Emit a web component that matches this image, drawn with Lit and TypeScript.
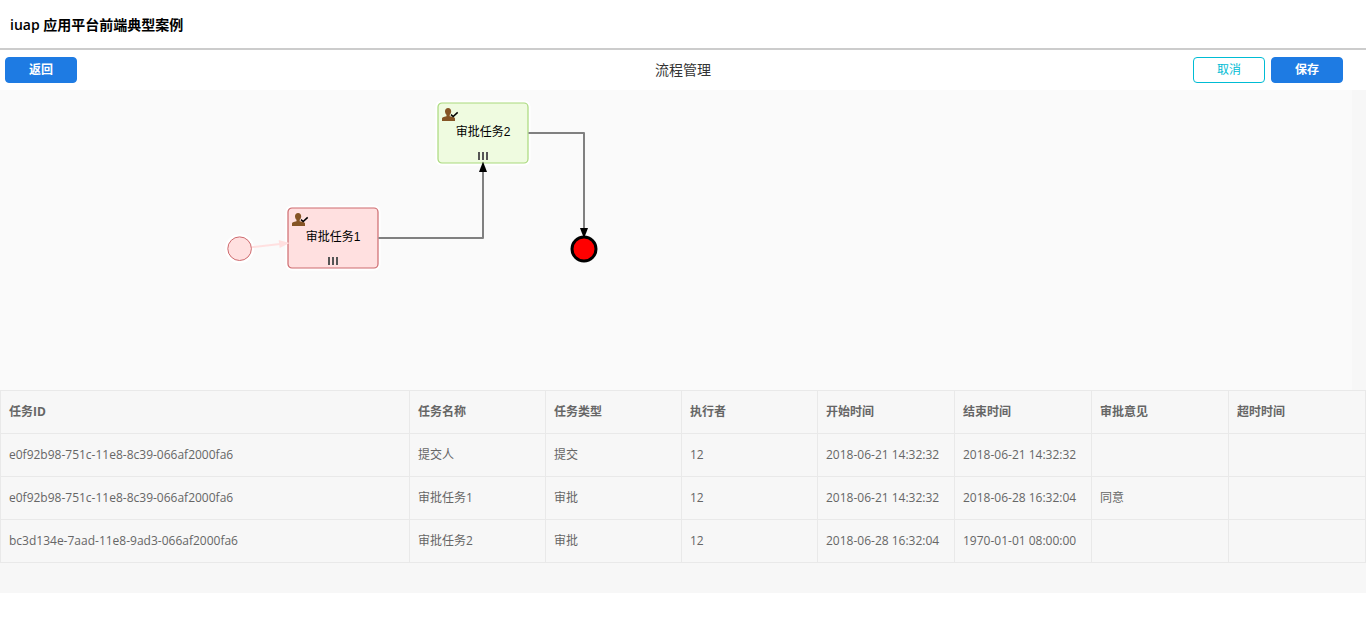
import { LitElement, html, svg, css } from "lit";
import { customElement } from "lit/decorators.js";

const HEADERS = ["任务ID", "任务名称", "任务类型", "执行者", "开始时间", "结束时间", "审批意见", "超时时间"];

const ROWS = [
  ["e0f92b98-751c-11e8-8c39-066af2000fa6", "提交人", "提交", "12", "2018-06-21 14:32:32", "2018-06-21 14:32:32", "", ""],
  ["e0f92b98-751c-11e8-8c39-066af2000fa6", "审批任务1", "审批", "12", "2018-06-21 14:32:32", "2018-06-28 16:32:04", "同意", ""],
  ["bc3d134e-7aad-11e8-9ad3-066af2000fa6", "审批任务2", "审批", "12", "2018-06-28 16:32:04", "1970-01-01 08:00:00", "", ""],
];

const taskNode = (x: number, y: number, label: string, kind: string) => svg`
  <g transform="translate(${x} ${y})">
    <rect class="halo" x="-2.500" y="-2.500" width="95" height="65" rx="6"></rect>
    <rect class="task ${kind}" width="90" height="60" rx="4"></rect>
    <path class="user" d="M4 18v-2.500c0-1 1.300-1.700 4.500-2.300v-1.400C7.600 11 7 9.600 7 8.200 7 6.300 8.200 5 10.100 5s3.100 1.300 3.100 3.200c0 1.400-.6 2.800-1.500 3.600v1.400c3.800.6 5.300 1.300 5.300 2.300V18z"></path>
    <path class="check" d="M13 11.600l2.200 1.900 4.500-4.100"></path>
    <text class="label" x="45" y="33">${label}</text>
    <path class="bars" d="M41 49v8M45 49v8M49 49v8"></path>
  </g>`;

@customElement("app-root")
export class AppRoot extends LitElement {
  static styles = css`
    :host {
      display: block;
      height: 635px;
      overflow: hidden;
      background: #fff;
      color: #333;
      font: 12px/18px "Open Sans", "Noto Sans CJK SC", sans-serif;
    }
    .title {
      box-sizing: border-box;
      height: 50px;
      margin: 0;
      padding: 0 10px;
      border-bottom: 2px solid #ccc;
      color: #000;
      font-size: 14px;
      font-weight: 600;
      line-height: 50px;
    }
    .toolbar {
      display: grid;
      grid-template-columns: 1fr auto 1fr;
      align-items: center;
      box-sizing: border-box;
      height: 40px;
      padding: 0 23px 0 5px;
    }
    .heading {
      padding-left: 18px;
      font-size: 14px;
      line-height: 20px;
    }
    .actions {
      display: flex;
      justify-content: flex-end;
      gap: 6px;
    }
    .btn {
      box-sizing: border-box;
      width: 72px;
      height: 26px;
      padding: 0;
      border: 1px solid #1e7be3;
      border-radius: 4px;
      background: #1e7be3;
      color: #fff;
      font: inherit;
      font-weight: 600;
      line-height: 24px;
      text-align: center;
    }
    .btn.outline {
      border-color: #00bcd4;
      background: #fff;
      color: #00bcd4;
      font-weight: 400;
    }
    .content {
      height: 503px;
      background: #f7f7f7;
    }
    .canvas {
      display: block;
      width: 1352px;
      height: 300px;
      background: #fafafa;
    }
    .halo { fill: #fff; }
    .task { stroke-width: 1.2; }
    .done { fill: #ffe0e0; stroke: #cd6a6e; }
    .active { fill: #effbe0; stroke: #a9d97c; }
    .user { fill: #855425; }
    .check { fill: none; stroke: #000; stroke-width: 1.5; }
    .bars { stroke: #555; stroke-width: 2; }
    .label {
      fill: #000;
      font-family: "Liberation Sans", "Noto Sans CJK SC", sans-serif;
      font-size: 12px;
      text-anchor: middle;
    }
    .flow { fill: none; stroke: #808080; stroke-width: 2; stroke-linejoin: round; }
    .passed { stroke: #ffe0e0; }
    .passed-head { fill: #ffe0e0; }
    .start { fill: #ffe0e0; stroke: #cd6a6e; }
    .end { fill: #f00; stroke: #000; stroke-width: 3; }
    .table {
      width: 100%;
      border-collapse: collapse;
      table-layout: fixed;
      color: #666;
    }
    .cell {
      box-sizing: border-box;
      height: 43px;
      padding: 0 8px;
      border: 1px solid #e9e9e9;
      text-align: left;
      white-space: nowrap;
    }
    .id { width: 409px; }
    .name { width: 136px; }
  `;

  render() {
    return html`
      <h1 class="title">iuap 应用平台前端典型案例</h1>
      <div class="toolbar">
        <div><button class="btn">返回</button></div>
        <div class="heading">流程管理</div>
        <div class="actions">
          <button class="btn outline">取消</button>
          <button class="btn">保存</button>
        </div>
      </div>
      <div class="content">
        <svg class="canvas" viewBox="0 0 1352 300">
          ${taskNode(438, 13, "审批任务2", "active")}
          ${taskNode(288, 118, "审批任务1", "done")}
          <path class="flow" d="M378.500 148H483V81"></path>
          <path d="M483 71.500l4 10.500h-8z"></path>
          <path class="flow" d="M528.500 43H584V140"></path>
          <path d="M584 148.500l-4-10.500h8z"></path>
          <circle class="halo" cx="239.600" cy="158.700" r="14.500"></circle>
          <path class="flow passed" d="M251.500 157.300L280 154.100"></path>
          <path class="passed-head" d="M289.500 153l-10.800-3 1 8z"></path>
          <circle class="start" cx="239.600" cy="158.700" r="11.800"></circle>
          <circle class="end" cx="584" cy="159" r="12"></circle>
        </svg>
        <table class="table">
          <colgroup>
            <col class="id" /><col class="name" /><col class="name" /><col class="name" />
            <col /><col /><col /><col />
          </colgroup>
          <thead>
            <tr>${HEADERS.map((h) => html`<th class="cell">${h}</th>`)}</tr>
          </thead>
          <tbody>
            ${ROWS.map((row) => html`<tr>${row.map((c) => html`<td class="cell">${c}</td>`)}</tr>`)}
          </tbody>
        </table>
      </div>
    `;
  }
}
